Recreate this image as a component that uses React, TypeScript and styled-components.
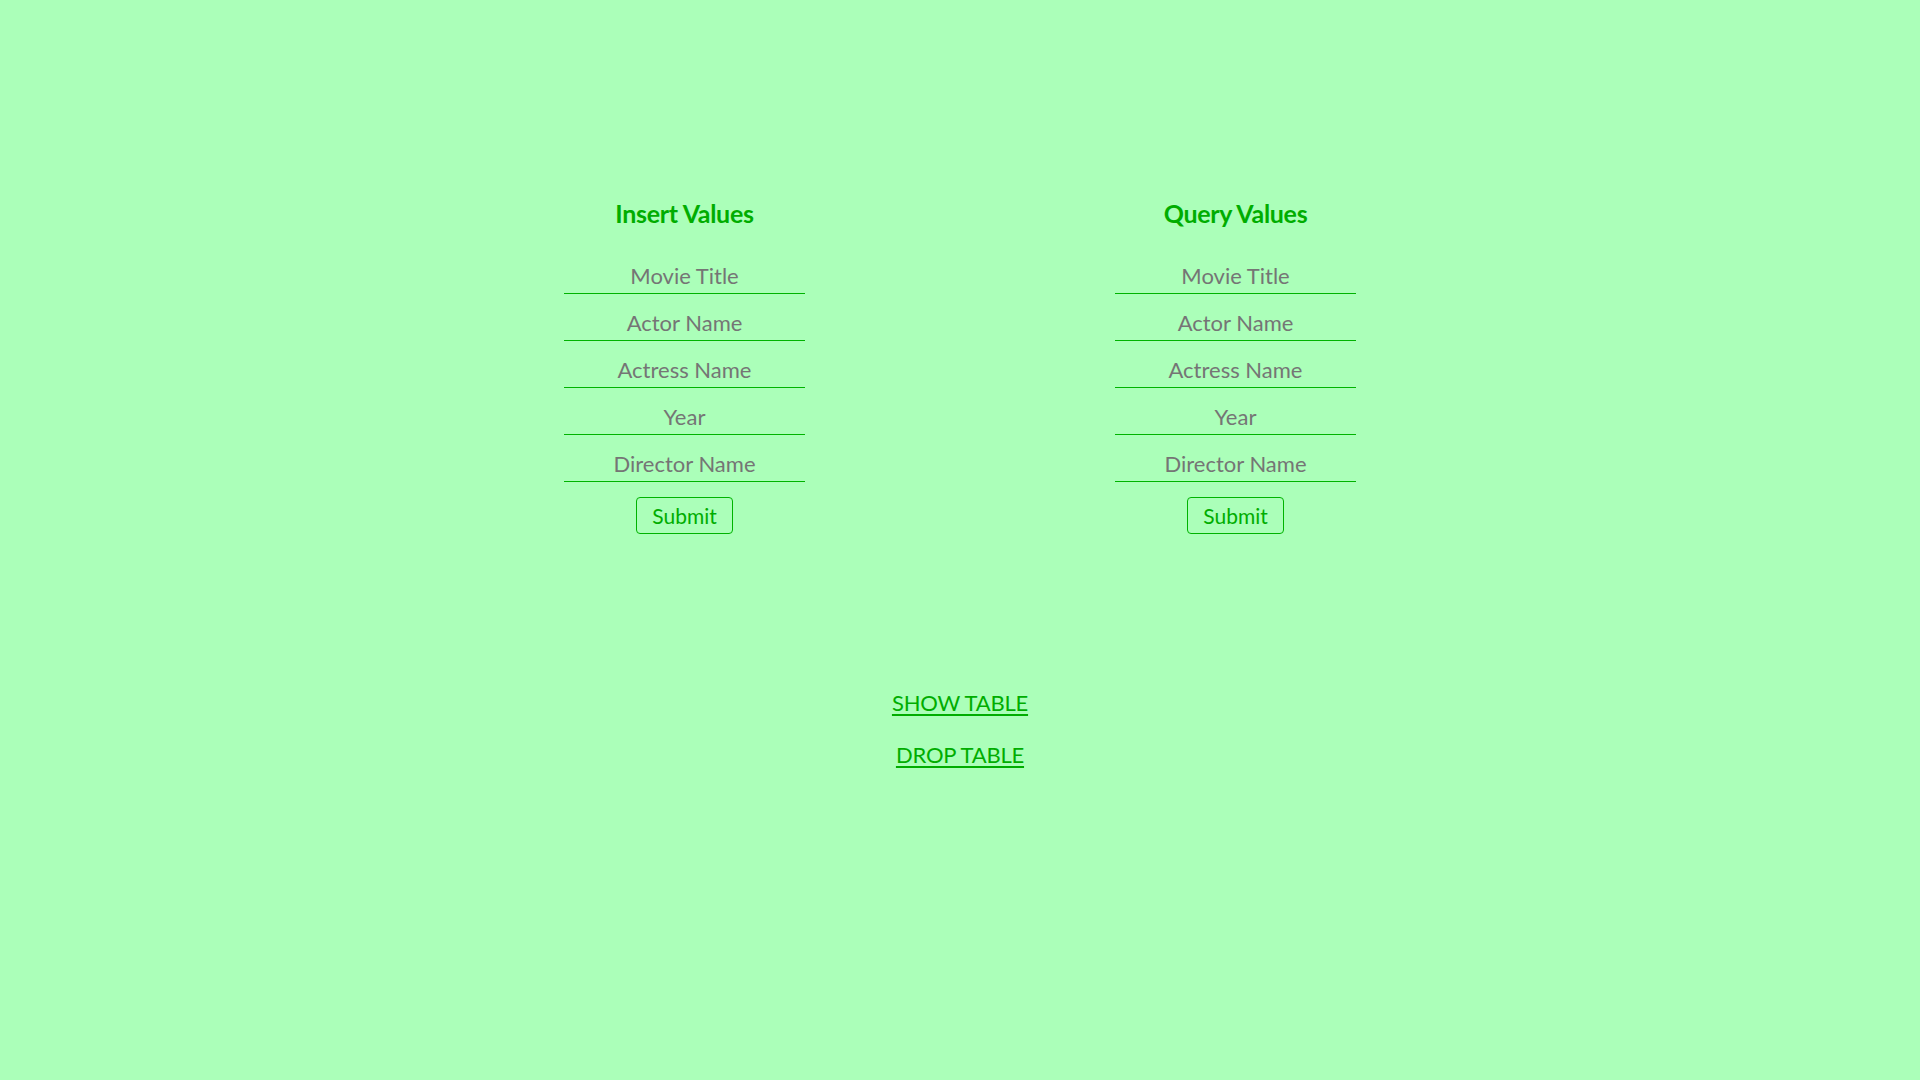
import React from "react";
import styled, { createGlobalStyle } from "styled-components";

const GlobalStyle = createGlobalStyle`
  html, body {
    margin: 0;
    padding: 0;
    background: #abffb9;
    font-family: "Lato", "Liberation Sans", sans-serif;
  }
`;

const Page = styled.main`
  min-height: 1080px;
  box-sizing: border-box;
  padding-top: 199px;
  display: flex;
  flex-direction: column;
  align-items: center;
`;

const Forms = styled.div`
  width: 1102px;
  display: grid;
  grid-template-columns: 1fr 1fr;
`;

const Form = styled.form`
  display: flex;
  flex-direction: column;
  align-items: center;
`;

const Heading = styled.h2`
  margin: 0 0 20px;
  font-size: 25px;
  line-height: 28px;
  font-weight: 700;
  color: #00ad00;
  letter-spacing: -0.3px;
`;

const Input = styled.input`
  width: 241px;
  height: 47px;
  box-sizing: border-box;
  padding: 10px 0 0;
  border: none;
  border-bottom: 1px solid #00b300;
  background: transparent;
  outline: none;
  text-align: center;
  font-family: inherit;
  font-size: 22px;
  color: #333;
  &::placeholder {
    color: #757575;
    opacity: 1;
  }
`;

const Submit = styled.button`
  margin-top: 15px;
  width: 97px;
  height: 37px;
  box-sizing: border-box;
  border: 1px solid #00b300;
  border-radius: 4px;
  background: transparent;
  color: #00ad00;
  font-family: inherit;
  font-size: 21px;
  padding: 0;
  cursor: pointer;
`;

const Links = styled.nav`
  margin-top: 156px;
  display: flex;
  flex-direction: column;
  align-items: center;
  gap: 26px;
`;

const TableLink = styled.a`
  font-size: 22px;
  line-height: 26px;
  color: #00ad00;
  text-decoration: underline;
  text-decoration-thickness: 2px;
  text-underline-offset: 3px;
  letter-spacing: -0.2px;
  cursor: pointer;
`;

const fields = ["Movie Title", "Actor Name", "Actress Name", "Year", "Director Name"];

function ValuesForm({ title }: { title: string }) {
  return (
    <Form onSubmit={(e) => e.preventDefault()}>
      <Heading>{title}</Heading>
      {fields.map((f) => (
        <Input key={f} placeholder={f} />
      ))}
      <Submit type="submit">Submit</Submit>
    </Form>
  );
}

export default function App() {
  return (
    <>
      <GlobalStyle />
      <Page>
        <Forms>
          <ValuesForm title="Insert Values" />
          <ValuesForm title="Query Values" />
        </Forms>
        <Links>
          <TableLink href="#">SHOW TABLE</TableLink>
          <TableLink href="#">DROP TABLE</TableLink>
        </Links>
      </Page>
    </>
  );
}
